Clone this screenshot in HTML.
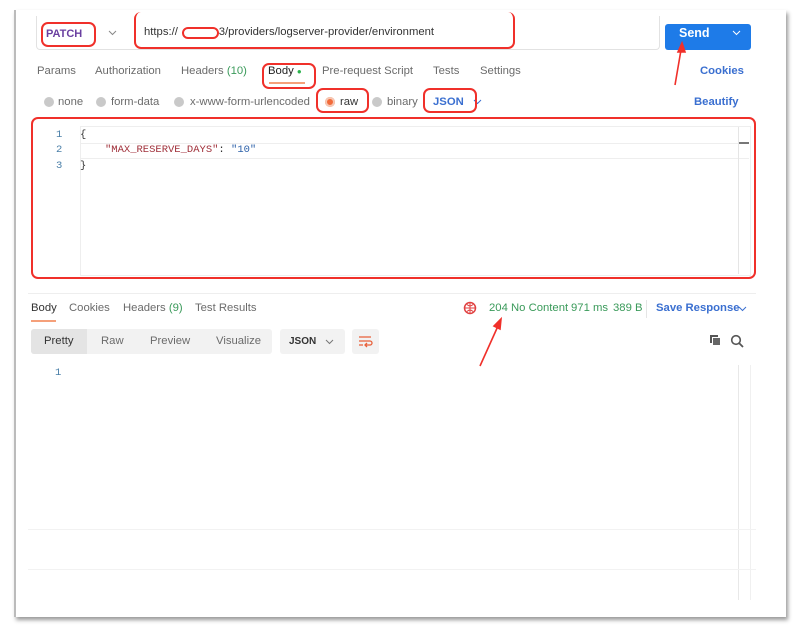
<!DOCTYPE html>
<html><head><meta charset="utf-8"><style>
body{margin:0;width:798px;height:636px;background:#fff;position:relative;overflow:hidden;font-family:"Liberation Sans",sans-serif;font-size:11.3px;color:#6b6b6b}
.a{position:absolute;white-space:nowrap}
.r{position:absolute;border:2px solid #f0302a;border-radius:7px;box-sizing:border-box}
.dot{position:absolute;width:10px;height:10px;border-radius:50%;background:#c9c9c9}
.mono{font-family:"Liberation Mono",monospace;font-size:10.5px}
.chev{position:absolute}
</style></head><body>
<div class="a" style="left:14px;top:10px;width:770px;height:607px;background:#fff;border-left:2px solid #bbb;box-shadow:2px 3px 4px #999;"></div>
<div class="a" style="left:36px;top:16px;width:622px;height:33px;border:1px solid #e2e2e2;border-top:none;border-radius:0 0 4px 4px"></div>
<div class="a" style="left:46px;top:28px;color:#6a3fa0;font-weight:bold;font-size:11px">PATCH</div>
<svg class="chev" style="left:108px;top:30px" width="9" height="6" viewBox="0 0 9 6"><path d="M1 1l3.5 3.5L8 1" stroke="#888" fill="none"/></svg>
<div class="a" style="left:144px;top:26px;color:#333;font-size:11.3px">https://&nbsp;&nbsp;&nbsp;&nbsp;&nbsp;&nbsp;&nbsp;&nbsp;&nbsp;&nbsp;&nbsp;&nbsp;&nbsp;3/providers/logserver-provider/environment</div>
<div class="r" style="left:41px;top:22px;width:55px;height:25px"></div>
<div class="r" style="left:134px;top:12px;width:381px;height:37px;border-top:none"></div>
<div class="r" style="left:182px;top:27px;width:37px;height:12px;border-radius:6px"></div>
<div class="a" style="left:665px;top:24px;width:86px;height:26px;background:#1e7be8;border-radius:3px"></div>
<div class="a" style="left:679px;top:26px;color:#fff;font-weight:bold;font-size:12.5px">Send</div>
<svg class="chev" style="left:732px;top:30px" width="9" height="6" viewBox="0 0 9 6"><path d="M1 1l3.5 3.5L8 1" stroke="#fff" fill="none"/></svg>
<div class="a" style="left:37px;top:65px">Params</div>
<div class="a" style="left:95px;top:65px">Authorization</div>
<div class="a" style="left:181px;top:65px">Headers <span style="color:#3a9a5a">(10)</span></div>
<div class="a" style="left:268px;top:65px;color:#222">Body <span style="color:#2bb24c;font-size:8px">&#9679;</span></div>
<div class="a" style="left:269px;top:82px;width:36px;height:2px;background:#f5a07a"></div>
<div class="a" style="left:322px;top:65px">Pre-request Script</div>
<div class="a" style="left:433px;top:65px">Tests</div>
<div class="a" style="left:480px;top:65px">Settings</div>
<div class="a" style="left:700px;top:65px;color:#3a6fd0;font-weight:bold">Cookies</div>
<div class="r" style="left:262px;top:63px;width:54px;height:26px"></div>
<div class="dot" style="left:44px;top:97px"></div><div class="a" style="left:58px;top:96px">none</div>
<div class="dot" style="left:96px;top:97px"></div><div class="a" style="left:111px;top:96px">form-data</div>
<div class="dot" style="left:174px;top:97px"></div><div class="a" style="left:190px;top:96px">x-www-form-urlencoded</div>
<div class="dot" style="left:325px;top:97px;background:#f26b3a;box-shadow:inset 0 0 0 2px #f6c8b5"></div><div class="a" style="left:340px;top:96px;color:#333">raw</div>
<div class="dot" style="left:372px;top:97px"></div><div class="a" style="left:387px;top:96px">binary</div>
<div class="a" style="left:433px;top:96px;color:#3a6fd0;font-weight:bold">JSON</div>
<svg class="chev" style="left:473px;top:99px" width="9" height="6" viewBox="0 0 9 6"><path d="M1 1l3.5 3.5L8 1" stroke="#3a6fd0" fill="none"/></svg>
<div class="a" style="left:694px;top:96px;color:#3a6fd0;font-weight:bold">Beautify</div>
<div class="r" style="left:316px;top:88px;width:53px;height:25px"></div>
<div class="r" style="left:423px;top:88px;width:54px;height:25px"></div>
<div class="a" style="left:80px;top:126px;width:669px;height:148px;border:1px solid #eee"></div>
<div class="a" style="left:80px;top:143px;width:669px;height:14px;border-top:1px solid #eee;border-bottom:1px solid #eee"></div>
<div class="a" style="left:738px;top:127px;width:1px;height:147px;background:#e5e5e5"></div>
<div class="a" style="left:739px;top:142px;width:10px;height:2px;background:#777"></div>
<div class="a mono" style="left:56px;top:129px;color:#4a7fa8">1</div>
<div class="a mono" style="left:56px;top:144px;color:#4a7fa8">2</div>
<div class="a mono" style="left:56px;top:160px;color:#4a7fa8">3</div>
<div class="a mono" style="left:80px;top:129px;color:#333">{</div>
<div class="a mono" style="left:105px;top:144px"><span style="color:#a0303a">"MAX_RESERVE_DAYS"</span><span style="color:#333">: </span><span style="color:#2a5fa8">"10"</span></div>
<div class="a mono" style="left:80px;top:160px;color:#333">}</div>
<div class="r" style="left:31px;top:117px;width:725px;height:162px"></div>
<div class="a" style="left:28px;top:293px;width:728px;height:1px;background:#eee"></div>
<div class="a" style="left:31px;top:302px;color:#333">Body</div>
<div class="a" style="left:31px;top:320px;width:25px;height:2px;background:#f5a07a"></div>
<div class="a" style="left:69px;top:302px">Cookies</div>
<div class="a" style="left:123px;top:302px">Headers <span style="color:#3a9a5a">(9)</span></div>
<div class="a" style="left:195px;top:302px">Test Results</div>
<svg class="a" style="left:463px;top:301px" width="15" height="15" viewBox="0 0 15 15"><circle cx="7" cy="7" r="5.5" fill="none" stroke="#e04040" stroke-width="1.5"/><path d="M2 7h10M7 1.5v11M4 3.5c2 2 4 2 6 0M4 10.5c2-2 4-2 6 0" stroke="#e04040" fill="none"/></svg>
<div class="a" style="left:489px;top:302px;color:#3a9a5a">204 No Content</div>
<div class="a" style="left:571px;top:302px;color:#3a9a5a">971 ms</div>
<div class="a" style="left:613px;top:302px;color:#3a9a5a">389 B</div>
<div class="a" style="left:646px;top:300px;width:1px;height:18px;background:#e5e5e5"></div>
<div class="a" style="left:656px;top:302px;color:#3a6fd0;font-weight:bold">Save Response</div>
<svg class="chev" style="left:738px;top:306px" width="9" height="6" viewBox="0 0 9 6"><path d="M1 1l3.5 3.5L8 1" stroke="#3a6fd0" fill="none"/></svg>
<div class="a" style="left:31px;top:329px;width:241px;height:25px;background:#f2f2f2;border-radius:3px"></div>
<div class="a" style="left:31px;top:329px;width:56px;height:25px;background:#e4e4e4;border-radius:3px 0 0 3px"></div>
<div class="a" style="left:44px;top:335px;color:#333">Pretty</div>
<div class="a" style="left:101px;top:335px">Raw</div>
<div class="a" style="left:150px;top:335px">Preview</div>
<div class="a" style="left:216px;top:335px">Visualize</div>
<div class="a" style="left:280px;top:329px;width:65px;height:25px;background:#f2f2f2;border-radius:3px"></div>
<div class="a" style="left:289px;top:336px;color:#333;font-size:10px;font-weight:bold">JSON</div>
<svg class="chev" style="left:325px;top:339px" width="9" height="6" viewBox="0 0 9 6"><path d="M1 1l3.5 3.5L8 1" stroke="#777" fill="none"/></svg>
<div class="a" style="left:352px;top:329px;width:27px;height:25px;background:#f2f2f2;border-radius:3px"></div>
<svg class="a" style="left:358px;top:335px" width="15" height="13" viewBox="0 0 15 13"><path d="M1 2h12M1 6h11a2 2 0 010 4H8M1 10h4M9 8l-2 2 2 2" stroke="#e8603a" stroke-width="1.3" fill="none"/></svg>
<svg class="a" style="left:709px;top:334px" width="13" height="13" viewBox="0 0 13 13"><rect x="1" y="1" width="8" height="8" fill="#555"/><rect x="3.5" y="3.5" width="8" height="8" fill="#666" stroke="#fff"/></svg>
<svg class="a" style="left:730px;top:334px" width="14" height="14" viewBox="0 0 14 14"><circle cx="6" cy="6" r="4.3" fill="none" stroke="#555" stroke-width="1.6"/><path d="M9 9l4 4" stroke="#555" stroke-width="1.8"/></svg>
<div class="a mono" style="left:55px;top:367px;color:#4a7fa8">1</div>
<div class="a" style="left:738px;top:365px;width:1px;height:235px;background:#e8e8e8"></div>
<div class="a" style="left:750px;top:365px;width:1px;height:235px;background:#f0f0f0"></div>
<div class="a" style="left:28px;top:529px;width:728px;height:1px;background:#f2f2f2"></div>
<div class="a" style="left:28px;top:569px;width:728px;height:1px;background:#f2f2f2"></div>
<svg class="a" style="left:0;top:0" width="798" height="636"><g stroke="#f0302a" stroke-width="1.6" fill="#f0302a"><path d="M675 85L681 50"/><path d="M682 43l-4 9 7 0z"/><path d="M480 366L498 326"/><path d="M501 319l-7 7 6 3z"/></g></svg>
</body></html>
